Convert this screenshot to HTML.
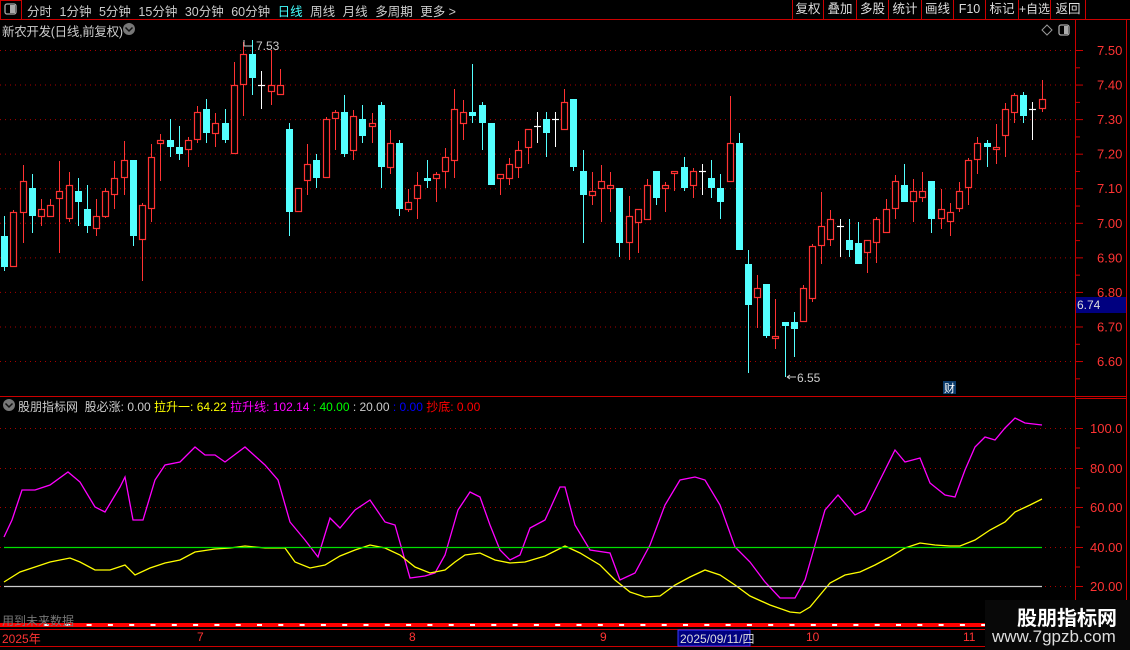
<!DOCTYPE html>
<html><head><meta charset="utf-8">
<style>
*{margin:0;padding:0;box-sizing:border-box}
body{width:1130px;height:650px;background:#000;overflow:hidden;position:relative;font-family:"Liberation Sans","Noto Sans CJK SC",sans-serif;font-size:13px;color:#c8c8c8}
.a{position:absolute;white-space:nowrap}
.menu span{margin-right:7.5px}
.btn{position:absolute;top:0;height:19px;border-left:1px solid #c00;text-align:center;line-height:19px;color:#ddd;white-space:nowrap;font-size:12.5px;overflow:hidden}
</style></head><body>
<svg class="a" style="left:0;top:0" width="1130" height="650" id="s">
<line x1="0" y1="19.5" x2="1130" y2="19.5" stroke="#c00"/>
<rect x="0.5" y="0.5" width="21" height="19" fill="none" stroke="#c00"/>
<rect x="5" y="4" width="11" height="10" rx="2" fill="none" stroke="#aaa" stroke-width="1.3"/><rect x="10" y="5" width="5" height="8" fill="#aaa"/>
<line x1="1085.5" y1="0" x2="1085.5" y2="20" stroke="#c00"/>
<line x1="1075.5" y1="20" x2="1075.5" y2="625" stroke="#c00"/>
<line x1="1126.5" y1="20" x2="1126.5" y2="625" stroke="#c00"/>
<line x1="0" y1="396.5" x2="1126" y2="396.5" stroke="#c00"/>
<line x1="1076" y1="398.5" x2="1126" y2="398.5" stroke="#c00"/>
<circle cx="129" cy="29" r="6" fill="#777"/><path d="M125.5 27.5l3.5 3.5 3.5-3.5" stroke="#111" stroke-width="1.5" fill="none"/>
<circle cx="9" cy="405" r="6" fill="#777"/><path d="M5.5 403.5l3.5 3.5 3.5-3.5" stroke="#111" stroke-width="1.5" fill="none"/>
<path d="M1047 25l5 5-5 5-5-5z" fill="none" stroke="#999"/>
<rect x="1059" y="25" width="10" height="10" rx="2" fill="none" stroke="#aaa" stroke-width="1.3"/><rect x="1064" y="26" width="4" height="8" fill="#aaa"/>
<g id="grid"></g><g id="c"></g><g id="ind"></g>
<rect x="1076" y="297" width="50" height="16" fill="#000080"/>
<text x="1077" y="309" fill="#ddd" font-size="12" font-family="Liberation Sans">6.74</text>
<rect x="943" y="381" width="13" height="13" fill="#0a3a6a"/>
<text x="944" y="392" fill="#fff" font-size="11" font-family="Noto Sans CJK SC">财</text>
<path d="M244 40v6h8" stroke="#ccc" fill="none"/><text x="256" y="50" fill="#ccc" font-size="12" font-family="Liberation Sans">7.53</text>
<path d="M787 377h9M787 377l3 -2M787 377l3 2" stroke="#ccc" fill="none"/><text x="797" y="382" fill="#ccc" font-size="12" font-family="Liberation Sans">6.55</text>
<line x1="4" y1="547.5" x2="1042" y2="547.5" stroke="#00e000" stroke-width="1.3"/>
<line x1="4" y1="586.5" x2="1042" y2="586.5" stroke="#ccc" stroke-width="1.3"/>
<rect x="0" y="623" width="1008" height="4" fill="#f00"/>
<g id="tk"></g>
<line x1="0" y1="629.5" x2="985" y2="629.5" stroke="#c00"/>
<line x1="0" y1="646.5" x2="985" y2="646.5" stroke="#c00"/>
<rect x="678" y="630" width="72" height="16" fill="#000080" stroke="#3a3aff"/>
<rect x="985" y="600" width="145" height="50" fill="#080808"/>
</svg>
<div class="a menu" style="left:27px;top:1px;color:#ccc;font-size:12.5px"><span>分时</span><span>1分钟</span><span>5分钟</span><span>15分钟</span><span>30分钟</span><span>60分钟</span><span style="color:#4ff">日线</span><span>周线</span><span>月线</span><span>多周期</span><span>更多 &gt;</span></div>
<div class="btn" style="left:792px;width:31px">复权</div><div class="btn" style="left:823px;width:33px">叠加</div><div class="btn" style="left:856px;width:32px">多股</div><div class="btn" style="left:888px;width:33px">统计</div><div class="btn" style="left:921px;width:32px">画线</div><div class="btn" style="left:953px;width:32px">F10</div><div class="btn" style="left:985px;width:33px">标记</div><div class="btn" style="left:1018px;width:32px;font-size:12px">+自选</div><div class="btn" style="left:1050px;width:35px">返回</div>
<div class="a" style="left:2px;top:21px;color:#ccc;font-size:12.5px;letter-spacing:-0.3px">新农开发(日线,前复权)</div>
<div class="a" style="left:18px;top:398px;font-size:12px"><span style="color:#ccc">股朋指标网 &nbsp;股必涨: 0.00 </span><span style="color:#ff0">拉升一: 64.22 </span><span style="color:#f0f">拉升线: 102.14 </span><span style="color:#0f0">: 40.00 </span><span style="color:#ccc">: 20.00 </span><span style="color:#00f">: 0.00 </span><span style="color:#f00">抄底: 0.00</span></div>
<div class="a" style="left:2px;top:612px;color:#777;font-size:12px">用到未来数据</div>
<div class="a" style="left:2px;top:630px;color:#f33;font-size:12px">2025年</div>
<div class="a" style="left:197px;top:630px;color:#f33;font-size:12px">7</div>
<div class="a" style="left:409px;top:630px;color:#f33;font-size:12px">8</div>
<div class="a" style="left:600px;top:630px;color:#f33;font-size:12px">9</div>
<div class="a" style="left:680px;top:630px;color:#ddd;font-size:12px">2025/09/11/四</div>
<div class="a" style="left:806px;top:630px;color:#f33;font-size:12px">10</div>
<div class="a" style="left:963px;top:630px;color:#f33;font-size:12px">11</div>
<div class="a" style="left:1017px;top:602px;color:#fff;font-size:20px;font-weight:bold">股朋指标网</div>
<div class="a" style="left:992px;top:627px;color:#ddd;font-size:17px">www.7gpzb.com</div>
<script>
var NS="http://www.w3.org/2000/svg";
function el(p,t,a){var e=document.createElementNS(NS,t);for(var k in a)e.setAttribute(k,a[k]);p.appendChild(e);return e}
var g=document.getElementById('grid'),s=document.getElementById('s');
var ps=['7.50','7.40','7.30','7.20','7.10','7.00','6.90','6.80','6.70','6.60'];
for(var i=0;i<10;i++){var y=50+i*34.56;el(g,'line',{x1:0,x2:1075,y1:y+.5,y2:y+.5,stroke:'#a00','stroke-dasharray':'1 4'});el(g,'line',{x1:1075,x2:1083,y1:y+.5,y2:y+.5,stroke:'#c00'});el(g,'line',{x1:1075,x2:1080,y1:y+17.8,y2:y+17.8,stroke:'#c00'});var t=el(g,'text',{x:1097,y:y+5,fill:'#f33','font-size':13,'font-family':'Liberation Sans'});t.textContent=ps[i];}
var iv=[['100.0',428],['80.00',468],['60.00',507],['40.00',547],['20.00',586]];
iv.forEach(function(a){el(g,'line',{x1:0,x2:1075,y1:a[1]+.5,y2:a[1]+.5,stroke:'#a00','stroke-dasharray':'1 4'});el(g,'line',{x1:1075,x2:1083,y1:a[1]+.5,y2:a[1]+.5,stroke:'#c00'});el(g,'line',{x1:1075,x2:1080,y1:a[1]+20,y2:a[1]+20,stroke:'#c00'});var t=el(g,'text',{x:1090,y:a[1]+5,fill:'#f33','font-size':13,'font-family':'Liberation Sans'});t.textContent=a[0];});
var C="c236,267,216,271;r212,267,210,267;r181,213,165,243;c188,216,174,233;r209,217,199,226;r205,217,199,217;r191,199,161,253;r185,219,172,222;c191,202,178,226;c209,226,185,233;r216,229,199,236;r191,217,188,218;r178,195,161,209;r160,178,141,195;c160,236,160,246;r205,240,203,281;r157,209,144,222;r140,144,134,181;c140,147,119,157;c147,154,126,160;r140,150,137,167;r112,140,106,143;c109,133,99,143;r123,134,113,147;c123,140,109,143;r85,154,62,154;r54,85,42,116;c54,78,40,95;w85,85,71,109;r85,92,50,105;r85,95,69,95;c129,212,123,236;r188,212,188,212;r164,181,144,195;c160,178,154,188;r119,178,117,178;r112,119,110,150;c112,154,95,157;r116,151,110,160;c119,136,105,143;r123,127,113,143;c105,167,102,188;r143,168,130,174;c143,209,140,216;r202,210,189,212;r185,199,172,219;c178,181,160,188;r174,179,172,202;r157,172,148,188;r109,161,89,178;r112,124,100,140;c112,116,64,123;c105,123,102,150;c123,185,123,185;r174,179,174,195;r164,179,158,185;r150,168,141,178;r129,148,129,164;w126,126,112,143;c119,133,112,157;w119,119,112,147;r102,130,89,130;c99,167,99,171;c171,195,150,243;r191,196,172,205;r181,189,165,222;r185,189,172,212;c188,243,188,257;r216,243,196,260;r209,223,209,253;r185,220,179,220;c171,198,171,205;r185,189,182,212;r171,174,171,191;c167,188,157,191;r171,186,168,198;w171,171,164,195;c178,188,160,198;c188,202,174,219;r143,182,96,182;c143,250,133,250;c264,305,250,373;r288,298,275,328;c284,336,284,338;r336,339,299,349;c322,326,322,377;c322,329,312,357;r288,322,285,322;r246,299,244,302;r226,246,192,264;r219,240,210,246;w226,226,219,257;c240,250,219,257;c243,264,222,264;r240,253,240,273;r219,243,217,263;r209,233,199,233;r181,209,175,219;c185,202,164,202;r191,202,179,222;r191,198,172,202;c181,219,181,233;r209,219,189,229;r212,222,203,236;r191,209,182,212;r160,188,158,205;r143,160,137,174;c143,147,140,167;r147,150,124,164;r109,136,103,157;r95,113,93,123;c95,116,92,123;w109,109,102,140;r99,109,80,112".split(';');
var cg=document.getElementById('c');
C.forEach(function(d,i){var t=d[0],v=d.slice(1).split(',').map(Number);var x=Math.round(4.3+9.18*i)+.5;var col=t=='r'?'#ff3232':t=='c'?'#54ffff':'#fff';
el(cg,'line',{x1:x,x2:x,y1:v[2],y2:v[3],stroke:col});
if(t=='w'||v[1]-v[0]<1){el(cg,'line',{x1:x-3.5,x2:x+3.5,y1:v[0]+.5,y2:v[0]+.5,stroke:col,'stroke-width':1.2});}
else if(t=='c'){el(cg,'rect',{x:x-3.5,y:v[0],width:7,height:v[1]-v[0],fill:col});}
else{el(cg,'rect',{x:x-3,y:v[0]+.5,width:6,height:v[1]-v[0]-1,fill:'#000',stroke:col,'stroke-width':1.2});}
});
var M="4,537 12,520 22,490 35,490 50,485 68,472 80,482 95,507 105,512 120,487 125,477 133,520 143,520 155,480 165,465 180,462 195,447 205,455 215,455 225,462 245,447 265,465 278,480 290,522 305,540 318,557 330,518 340,528 355,510 370,500 385,522 395,525 410,578 425,576 435,573 445,555 458,510 470,492 480,497 490,525 500,550 510,560 520,555 530,528 545,520 560,487 565,487 575,525 590,550 610,553 620,580 635,573 650,545 665,505 680,480 695,477 705,480 720,505 735,547 750,562 765,582 780,598 795,598 805,580 815,545 825,510 838,495 855,515 865,510 880,480 895,450 905,462 920,458 930,483 945,495 955,497 965,470 975,447 985,437 995,440 1005,428 1015,418 1025,423 1042,425";
var Y="4,582 20,572 35,567 50,562 70,558 80,562 95,570 110,570 125,565 135,575 150,568 165,563 180,560 195,552 215,549 230,548 245,546 265,548 285,548 295,562 310,568 325,565 340,556 355,550 370,545 385,548 400,555 415,567 430,573 445,570 455,562 465,555 480,553 495,560 510,563 525,562 545,556 565,546 580,553 600,565 615,580 630,592 645,597 660,596 675,585 690,577 705,570 720,575 735,585 750,596 770,605 790,612 800,613 810,607 820,595 830,583 845,575 860,572 875,565 890,557 905,548 920,543 935,545 950,546 960,546 975,540 990,530 1005,522 1015,512 1030,505 1042,499";
var ig=document.getElementById('ind');
el(ig,'polyline',{points:M,fill:'none',stroke:'#ff00ff','stroke-width':1.3});
el(ig,'polyline',{points:Y,fill:'none',stroke:'#ffff00','stroke-width':1.3});
var tk=document.getElementById('tk');
for(var x=44;x<1008;x+=21.3){el(tk,'rect',{x:x,y:624,width:5,height:2,fill:'#fff'});}
</script>
</body></html>
